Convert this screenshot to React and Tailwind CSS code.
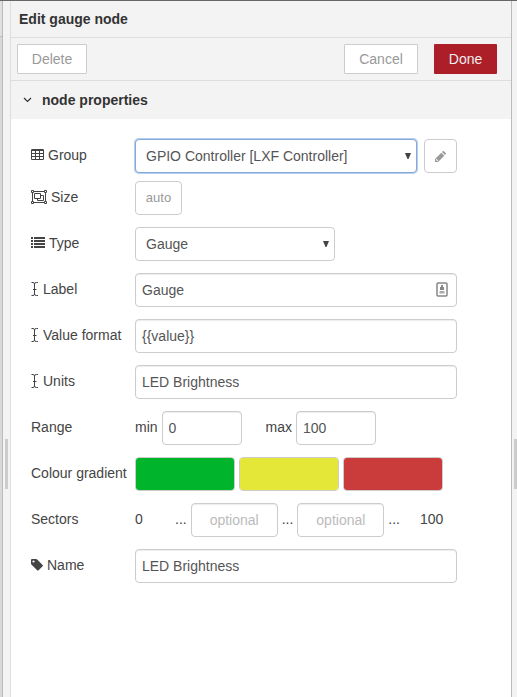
import React from "react";

function Icon({ w, h, className = "", children }) {
  return (
    <svg
      width={w}
      height={h}
      viewBox={`0 0 ${w} ${h}`}
      fill="currentColor"
      aria-hidden="true"
      className={`shrink-0 ${className}`}
    >
      {children}
    </svg>
  );
}

const TableIcon = () => (
  <Icon w={13} h={12}>
    <path
      fillRule="evenodd"
      d="M1.2 0h10.6A1.2 1.2 0 0 1 13 1.200v8.600a1.200 1.200 0 0 1-1.200 1.200H1.200A1.200 1.200 0 0 1 0 9.800V1.200A1.200 1.200 0 0 1 1.200 0zM1 2v2h3V2zM5 2v2h3V2zM9 2v2h3V2zM1 5v2h3V5zM5 5v2h3V5zM9 5v2h3V5zM1 8v2h3V8zM5 8v2h3V8zM9 8v2h3V8z"
    />
  </Icon>
);

const ObjectGroupIcon = () => (
  <Icon w={16} h={14}>
    <path
      fill="none"
      stroke="currentColor"
      d="M3 1.500h10M3 12.500h10M1.500 3v8M14.500 3v8M.5 .5h2v2h-2zM13.500 .5h2v2h-2zM.5 11.500h2v2h-2zM13.500 11.500h2v2h-2zM3.500 3.500h6v5h-6zM9.500 5.500h3v5h-6v-2"
    />
  </Icon>
);

const ListIcon = () => (
  <Icon w={14} h={12}>
    <path d="M0 0h2v2H0zM3 0h11v2H3zM0 3h2v2H0zM3 3h11v2H3zM0 6h2v2H0zM3 6h11v2H3zM0 9h2v2H0zM3 9h11v2H3z" />
  </Icon>
);

const CursorIcon = () => (
  <Icon w={8} h={14}>
    <path
      fill="none"
      stroke="currentColor"
      d="M.5 .5H2Q3.500 .5 3.500 2v10q0 1.500-1.500 1.500H.5M7 .5H5.500Q3.500 .5 3.500 2M3.500 12q0 1.500 2 1.500H7M2 7.500h3.500"
    />
  </Icon>
);

const TagIcon = () => (
  <Icon w={12} h={12}>
    <path
      fillRule="evenodd"
      d="M1 0h4q.6 0 1.200.5l5.400 5.400q.7.700 0 1.400l-4 4q-.7.700-1.400 0L.6 5.800Q0 5.200 0 4.500V1Q0 0 1 0zM2.500 1.400a1.100 1.100 0 1 0 0 2.200a1.100 1.100 0 1 0 0-2.200z"
    />
  </Icon>
);

const PencilIcon = () => (
  <Icon w={11} h={11}>
    <path
      fillRule="evenodd"
      d="M0 11V8l6.300-6.300 3 3L3 11zM7 1l.7-.7q.6-.5 1.200 0l1.800 1.800q.5.600 0 1.200l-.7.700zM.9 8.500v.8h.9v.8h.8l.6-.6-1.700-1.600z"
    />
  </Icon>
);

const CaretIcon = () => (
  <Icon w={6} h={6} className="pointer-events-none absolute right-1.5 top-3.5 text-[#444]">
    <path d="M0 0h6L3.500 6h-1z" />
  </Icon>
);

const ContactIcon = () => (
  <Icon w={12} h={15} className="pointer-events-none absolute right-[9px] top-[9px] text-[#888]">
    <rect x="1" y="1" width="10" height="13" rx="1" fill="none" stroke="currentColor" strokeWidth="1.500" />
    <path d="M5 3h2v2h1v3H4V5h1z" />
    <path d="M3.500 9h5v2.500h-5z" fill="#aaa" />
  </Icon>
);

const field =
  "h-[34px] min-w-0 rounded border border-[#ccc] bg-white px-1.5 text-[#555] shadow-[inset_0_1px_1px_rgba(0,0,0,0.075)] outline-none placeholder:text-[#bbb]";
const selectBox =
  "h-[34px] w-full appearance-none rounded border bg-white px-2.5 text-[#555] outline-none";
const button =
  "flex items-center justify-center border border-[#ccc] bg-white text-[#999]";

function Row({ id, label, icon, children }) {
  return (
    <div className="flex items-center">
      <label htmlFor={id} className="flex w-[104px] shrink-0 items-center gap-1 whitespace-nowrap pb-0.5">
        {icon}
        {label}
      </label>
      <div className="flex min-w-0 flex-1 items-center gap-1">{children}</div>
    </div>
  );
}

function Swatch({ id, label, value }) {
  return (
    <input
      id={id}
      type="color"
      aria-label={label}
      defaultValue={value}
      className="h-[34px] w-[100px] appearance-none overflow-hidden rounded border border-[#ccc] bg-transparent p-0 [&::-webkit-color-swatch-wrapper]:p-0 [&::-webkit-color-swatch]:border-0"
    />
  );
}

function Handle({ className }) {
  return (
    <div className={`flex flex-col bg-[#f3f3f3] ${className}`}>
      <div className="grow-[21]" />
      <div className="h-[50px] w-[3px] bg-[#ccc]" />
      <div className="grow-[10]" />
    </div>
  );
}

export default function App() {
  return (
    <div className="flex min-h-screen border-t border-[#666] bg-white font-['Liberation_Sans',Arial,sans-serif] text-[14px] leading-5 text-[#444]">
      <div className="w-[3px] shrink-0 border-r border-[#bbb] bg-[#d8d8d8]">
        <div className="h-9 border-b border-[#bbb] bg-[#e0e0e0]" />
      </div>
      <Handle className="w-2 shrink-0 items-center border-r border-[#ddd]" />

      <main className="min-w-0 flex-1">
        <header className="flex h-[37px] items-center border-b border-[#ddd] bg-[#f3f3f3] px-2">
          <h1 className="font-bold text-[#333]">Edit gauge node</h1>
        </header>
        <div className="flex h-[43px] items-center border-b border-[#ddd] bg-[#f3f3f3] pl-1.5 pr-3.5">
          <button type="button" className={`${button} h-[30px] w-[70px] rounded-[1px]`}>Delete</button>
          <button type="button" className={`${button} ml-auto h-[30px] w-[74px] rounded-[1px]`}>Cancel</button>
          <button type="button" className="ml-4 h-[30px] w-[63px] rounded-[1px] bg-[#ad1f28] text-[#eee]">
            Done
          </button>
        </div>
        <button type="button" className="flex h-[38px] w-full items-center gap-2.5 bg-[#f3f3f3] px-3 font-bold text-[#333]">
          <Icon w={9} h={6}>
            <path d="M1 1l3.500 3.500L8 1" fill="none" stroke="currentColor" strokeWidth="1.200" />
          </Icon>
          node properties
        </button>

        <form className="flex flex-col gap-3 py-5 pl-5 pr-[54px]">
          <div className="flex flex-col gap-2">
            <Row id="group" label="Group" icon={<TableIcon />}>
              <div className="relative mr-[3px] min-w-0 flex-1">
                <select id="group" className={`${selectBox} border-[#85a9d9] shadow-[0_0_0_1px_#b5cdee]`}>
                  <option>GPIO Controller [LXF Controller]</option>
                </select>
                <CaretIcon />
              </div>
              <button type="button" aria-label="Edit group" className={`${button} h-[34px] w-[33px] rounded text-[#777]`}>
                <PencilIcon />
              </button>
            </Row>
            <Row id="size" label="Size" icon={<ObjectGroupIcon />}>
              <button id="size" type="button" className={`${button} h-[34px] w-[47px] rounded text-[13px]`}>
                auto
              </button>
            </Row>
          </div>
          <Row id="type" label="Type" icon={<ListIcon />}>
            <div className="relative w-[200px]">
              <select id="type" className={`${selectBox} border-[#ccc]`}>
                <option>Gauge</option>
              </select>
              <CaretIcon />
            </div>
          </Row>
          <Row id="label" label="Label" icon={<CursorIcon />}>
            <div className="relative flex flex-1">
              <input id="label" type="text" defaultValue="Gauge" className={`${field} flex-1`} />
              <ContactIcon />
            </div>
          </Row>
          <Row id="format" label="Value format" icon={<CursorIcon />}>
            <input id="format" type="text" defaultValue="{{value}}" className={`${field} flex-1`} />
          </Row>
          <Row id="units" label="Units" icon={<CursorIcon />}>
            <input id="units" type="text" defaultValue="LED Brightness" className={`${field} flex-1`} />
          </Row>
          <Row id="min" label="Range">
            <label htmlFor="min" className="pb-0.5">min</label>
            <input id="min" type="text" defaultValue="0" className={`${field} mr-5 w-20`} />
            <label htmlFor="max" className="pb-0.5">max</label>
            <input id="max" type="text" defaultValue="100" className={`${field} w-20`} />
          </Row>
          <Row id="low" label="Colour gradient">
            <Swatch id="low" label="Low colour" value="#00b52b" />
            <Swatch id="mid" label="Middle colour" value="#e4e638" />
            <Swatch id="high" label="High colour" value="#ca3b3b" />
          </Row>
          <Row id="sector1" label="Sectors">
            <span className="w-9 pb-0.5">0</span>
            <span className="pb-0.5">...</span>
            <input id="sector1" type="text" placeholder="optional" className={`${field} w-[87px] text-center`} />
            <span className="pb-0.5">...</span>
            <input id="sector2" type="text" aria-label="Second sector" placeholder="optional" className={`${field} w-[87px] text-center`} />
            <span className="pb-0.5">...</span>
            <span className="ml-4 pb-0.5">100</span>
          </Row>
          <Row id="name" label="Name" icon={<TagIcon />}>
            <input id="name" type="text" defaultValue="LED Brightness" className={`${field} flex-1`} />
          </Row>
        </form>
      </main>

      <Handle className="w-1.5 shrink-0 items-end border-l border-[#bbb]" />
    </div>
  );
}
